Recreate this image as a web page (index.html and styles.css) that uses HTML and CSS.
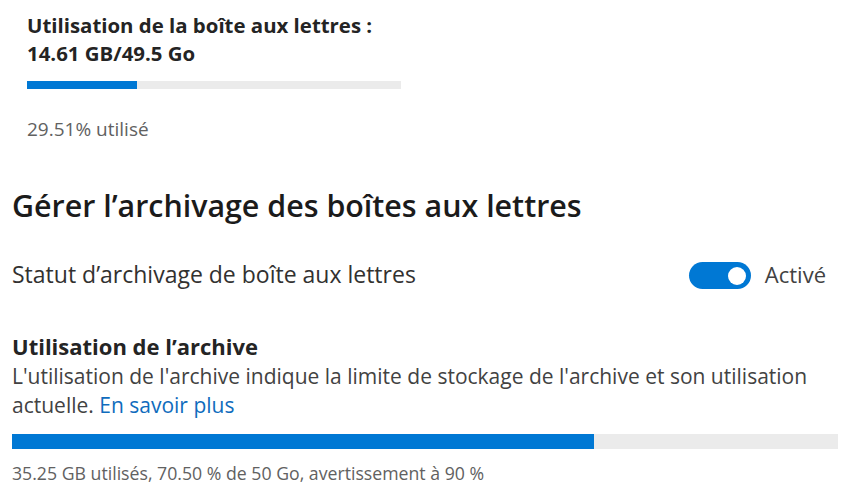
FILE: index.html
```html
<!DOCTYPE html>
<html lang="fr">
<head>
<meta charset="utf-8">
<title>Archivage</title>
<link rel="stylesheet" href="styles.css">
</head>
<body>
<div class="page">
  <section class="usage">
    <div class="usage-title">Utilisation de la boîte aux lettres :<br>14.61 GB/49.5 Go</div>
    <div class="bar bar-small"><div class="fill" style="width:29.51%"></div></div>
    <div class="usage-pct">29.51% utilisé</div>
  </section>
  <section class="archive">
    <h2 class="heading">Gérer l’archivage des boîtes aux lettres</h2>
    <div class="status-row">
      <span class="status-label">Statut d’archivage de boîte aux lettres</span>
      <div class="toggle-wrap">
        <span class="toggle"><span class="knob"></span></span>
        <span class="toggle-text">Activé</span>
      </div>
    </div>
    <div class="sub-title">Utilisation de l’archive</div>
    <p class="desc">L'utilisation de l'archive indique la limite de stockage de l'archive et son utilisation actuelle. <a href="#" class="link">En savoir plus</a></p>
    <div class="bar bar-large"><div class="fill" style="width:70.5%"></div></div>
    <div class="foot">35.25 GB utilisés, 70.50 % de 50 Go, avertissement à 90 %</div>
  </section>
</div>
</body>
</html>
```
FILE: styles.css
```css
* { box-sizing: border-box; }
html, body { margin: 0; padding: 0; background: #fff; }
body {
  font-family: "Open Sans", "Noto Sans", sans-serif;
  color: #242424;
  width: 854px;
  height: 490px;
  overflow: hidden;
}
.page { padding: 0 16px 0 12px; }
.usage { padding: 11px 0 0 15px; }
.usage-title {
  font-size: 20.4px;
  font-weight: 700;
  line-height: 28px;
  color: #242424;
}
.bar { background: #ebebeb; }
.bar .fill { height: 100%; background: #0078d4; }
.bar-small { width: 374px; height: 8px; margin-top: 14px; }
.usage-pct {
  margin-top: 28px;
  font-size: 19px;
  color: #616161;
  line-height: 24px;
}
.archive { margin-top: 47px; }
.heading {
  margin: 0;
  font-size: 30.4px;
  font-weight: 600;
  line-height: 36px;
  color: #1b1b1b;
}
.status-row {
  display: flex;
  align-items: center;
  justify-content: space-between;
  margin-top: 36px;
  padding-right: 12px;
  height: 28px;
}
.status-label { font-size: 23px; line-height: 28px; color: #323130; }
.toggle-wrap { display: flex; align-items: center; gap: 14px; }
.toggle {
  width: 62px;
  height: 27px;
  border-radius: 14px;
  background: #0078d4;
  display: flex;
  align-items: center;
  justify-content: flex-end;
  padding-right: 5px;
  margin-top: 3px;
}
.knob { width: 18px; height: 18px; border-radius: 50%; background: #fff; }
.toggle-text { font-size: 22px; line-height: 28px; color: #424242; }
.sub-title {
  margin-top: 44px;
  font-size: 22px;
  font-weight: 700;
  line-height: 28px;
  color: #242424;
}
.desc {
  margin: 2px 0 0;
  font-size: 21px;
  line-height: 29px;
  color: #424242;
}
.link { color: #0f6cbd; text-decoration: none; }
.bar-large { width: 826px; height: 15px; margin-top: 14px; }
.foot {
  margin-top: 13px;
  font-size: 17.7px;
  color: #616161;
  line-height: 22px;
}
```
